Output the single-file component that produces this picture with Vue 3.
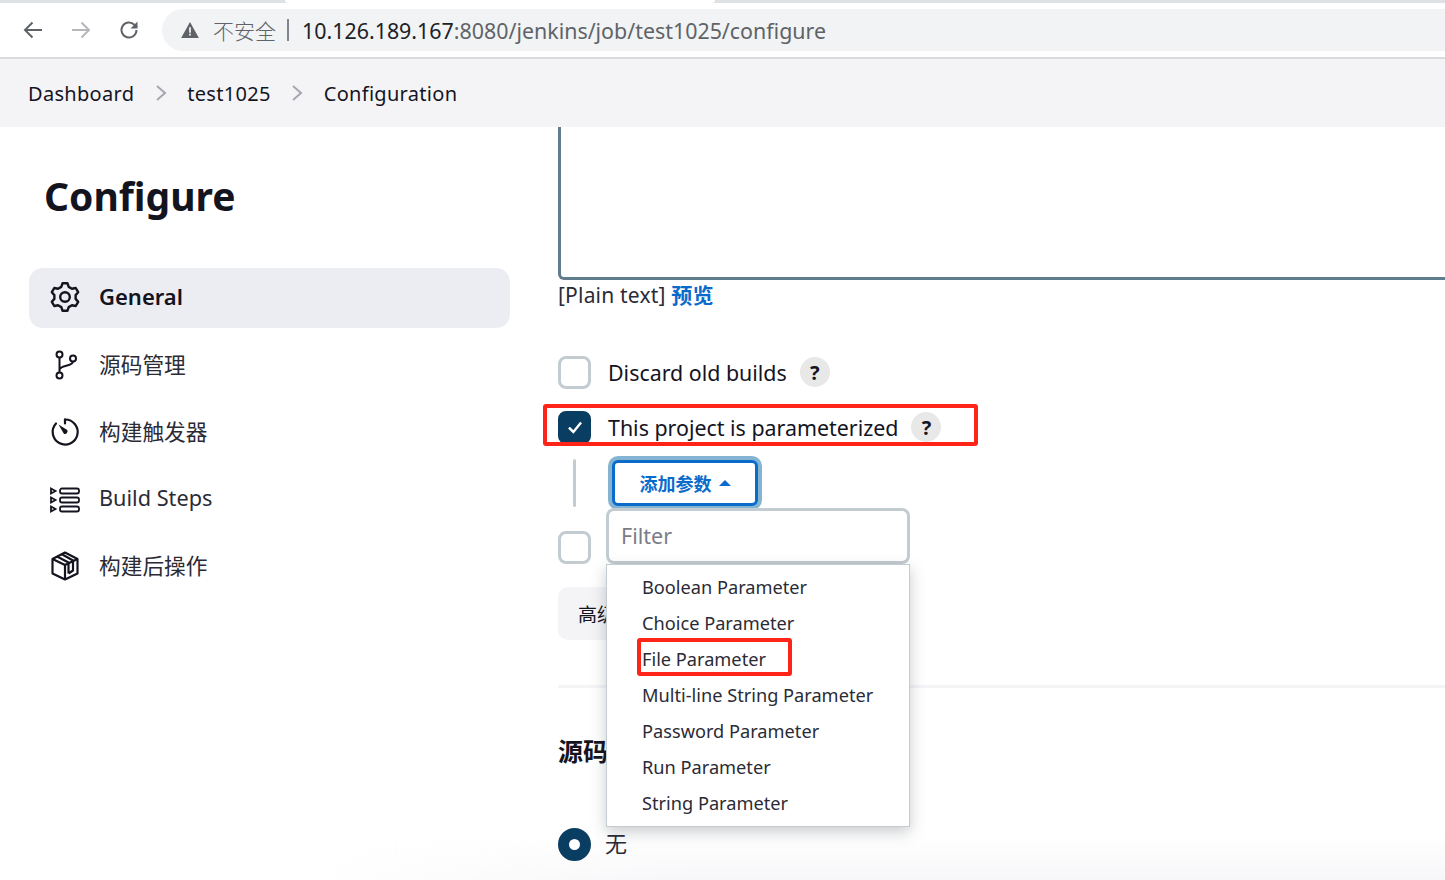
<script setup>
const crumbs = ['Dashboard', 'test1025', 'Configuration']
const params = ['Boolean Parameter', 'Choice Parameter', 'File Parameter', 'Multi-line String Parameter', 'Password Parameter', 'Run Parameter', 'String Parameter']
const gearPoints = Array.from({ length: 6 }, (_, i) => {
  const a = -90 + 60 * i
  return [[a - 20, 10.8], [a - 10, 14], [a + 10, 14], [a + 20, 10.8]]
    .map(([d, r]) => `${(16 + r * Math.cos(d * Math.PI / 180)).toFixed(2)},${(16 + r * Math.sin(d * Math.PI / 180)).toFixed(2)}`)
    .join(' ')
}).join(' ')
</script>

<template>
  <div class="page">
    <div class="tabstrip"><span class="tab"></span></div>
    <header class="toolbar">
      <svg class="tool first" viewBox="0 0 24 24"><path d="M21 12H4M11.500 4.500 4 12l7.500 7.500" fill="none" stroke="#5f6368" stroke-width="2"/></svg>
      <svg class="tool" viewBox="0 0 24 24"><path d="M3 12h17M12.500 4.500 20 12l-7.500 7.500" fill="none" stroke="#b5b7ba" stroke-width="2"/></svg>
      <svg class="tool" viewBox="0 0 24 24"><path d="M19.500 12a7.500 7.500 0 1 1-2.200-5.300L20 9.400" fill="none" stroke="#5f6368" stroke-width="2"/><path d="M20.500 3.500v7h-7z" fill="#5f6368"/></svg>
      <div class="omnibox">
        <svg class="warn" viewBox="0 0 20 18"><path d="M10 0 20 18H0z" fill="#5f6368"/><path d="M9 6h2v6H9zM9 13.300h2v2H9z" fill="#f1f3f4"/></svg>
        <span class="insecure">不安全</span>
        <span class="bar"></span>
        <span class="url"><b>10.126.189.167</b>:8080/jenkins/job/test1025/configure</span>
      </div>
    </header>

    <nav class="crumbs">
      <template v-for="(c, i) in crumbs" :key="c">
        <span>{{ c }}</span>
        <svg v-if="i < 2" class="chev" viewBox="0 0 12 18"><path d="M2 2l8 7-8 7" fill="none" stroke="#a5a6b2" stroke-width="2"/></svg>
      </template>
    </nav>

    <div class="fade"></div>
    <div class="body">
      <aside class="side">
        <h1>Configure</h1>
        <ul class="menu">
          <li class="active">
            <svg class="gear" viewBox="0 0 32 32"><polygon :points="gearPoints" fill="none" stroke="#14141f" stroke-width="2.400" stroke-linejoin="round"/><circle cx="16" cy="16" r="4.800" fill="none" stroke="#14141f" stroke-width="2.400"/></svg>
            <span>General</span>
          </li>
          <li>
            <svg viewBox="0 0 32 32"><g fill="none" stroke="#14141f" stroke-width="2"><circle cx="10.500" cy="5.500" r="3"/><circle cx="10.500" cy="26.500" r="3"/><circle cx="24" cy="9.500" r="3"/><path d="M10.500 8.500v15M10.500 21c0-5 13.500-3.500 13.500-8.500"/></g></svg>
            <span>源码管理</span>
          </li>
          <li>
            <svg viewBox="0 0 32 32"><g fill="none" stroke="#14141f" stroke-width="2.200" stroke-linecap="round"><path d="M16 3.500a12.500 12.500 0 1 1-9 4"/><path d="M16 3.500v4"/></g><path d="M9.500 8.500l8.700 5.500a2.600 2.600 0 0 1-3.300 3.700z" fill="#14141f"/></svg>
            <span>构建触发器</span>
          </li>
          <li>
            <svg class="steps" viewBox="0 0 32 32"><g fill="none" stroke="#14141f" stroke-width="1.800"><rect x="11" y="4.500" width="19" height="5" rx="2"/><rect x="11" y="13.500" width="19" height="5" rx="2"/><rect x="11" y="22.500" width="19" height="5" rx="2"/><path d="M2 4.500 6.500 7 2 9.500zM2 13.500 6.500 16 2 18.500zM2 22.500 6.500 25 2 27.500z"/></g></svg>
            <span>Build Steps</span>
          </li>
          <li>
            <svg viewBox="0 0 32 32"><g fill="none" stroke="#14141f" stroke-width="2.200" stroke-linejoin="round"><path d="M16 2.500 28.500 9v14.500L16 29.500 3.500 23.500V9z"/><path d="M3.500 9 16 15l12.500-6M16 15v14.500"/><path d="M8 6.500 19.500 12.500V23.500M12.500 4 24 10.500V20.500L19.500 23.500"/></g></svg>
            <span>构建后操作</span>
          </li>
        </ul>
      </aside>

      <main class="main">
        <div class="textarea"></div>
        <p class="plain">[Plain text] <a>预览</a></p>

        <label class="row discard">
          <span class="box"></span>
          <span>Discard old builds</span>
          <span class="help">?</span>
        </label>
        <label class="row param">
          <span class="box on">
            <svg viewBox="0 0 20 20"><path d="M4.500 10.500 8.500 14.500 15.500 6" fill="none" stroke="#fff" stroke-width="2.200"/></svg>
          </span>
          <span>This project is parameterized</span>
          <span class="help">?</span>
        </label>
        <div class="nested">
          <span class="rule"></span>
          <button class="add">添加参数<i class="caret"></i></button>
        </div>
        <div class="row third"><span class="box"></span></div>
        <div class="advanced">高级</div>
        <hr class="sep" />
        <h2>源码管理</h2>
        <div class="radio-row"><span class="radio"></span><span class="radio-label">无</span></div>

        <div class="dropdown">
          <div class="filter">Filter</div>
          <ul class="list">
            <li v-for="p in params" :key="p">{{ p }}</li>
          </ul>
        </div>
        <span class="mark mark-row"></span>
        <span class="mark mark-file"></span>
      </main>
    </div>
  </div>
</template>

<style>
html, body { margin: 0; background: #fff; }
</style>

<style scoped>
.page {
  width: 1445px; height: 880px; overflow: hidden; position: relative;
  font-family: "Noto Sans", "Noto Sans CJK SC", sans-serif;
  color: #14141f; background: #fff;
}
.tabstrip { height: 3px; background: #dee1e6; display: flex; }
.tab { width: 430px; margin-left: 285px; background: #fff; border-radius: 0 0 10px 10px; }
.toolbar {
  height: 56px; box-sizing: border-box; display: flex; align-items: center;
  border-bottom: 2px solid #dadbdd; padding: 0 0 0 21px; background: #fff;
}
.tool { width: 24px; height: 24px; margin-right: 24px; flex: none; }
.omnibox {
  flex: 1; height: 42px; margin-left: -3px; margin-right: -40px; background: #f1f3f4;
  border-radius: 21px; display: flex; align-items: center; padding-left: 19px;
}
.warn { width: 18px; height: 16px; margin-right: 14px; }
.insecure { font-size: 21px; color: #5f6368; font-weight: 300; }
.bar { width: 2px; height: 22px; background: #80868b; margin: 0 13px 0 11px; }
.url { font-size: 21.400px; color: #5f6368; white-space: nowrap; }
.url b { font-weight: 400; color: #202124; }
.crumbs {
  height: 68px; box-sizing: border-box; background: #f4f4f7; display: flex; align-items: center;
  padding: 0 0 0 28px; font-size: 20px; letter-spacing: .3px;
}
.chev { width: 12px; height: 18px; margin: 0 20.500px; flex: none; }
.body { display: flex; height: 753px; overflow: hidden; position: relative; z-index: 1; }
.side { width: 558px; flex: none; box-sizing: border-box; padding: 42px 48px 0 29px; }
h1 { margin: 0 0 45px 15px; font-size: 39px; line-height: 54px; font-weight: 700; }
.menu { list-style: none; margin: 0; padding: 0; display: flex; flex-direction: column; gap: 7px; }
.menu li {
  height: 60px; display: flex; align-items: center; gap: 18px; padding-left: 20px;
  border-radius: 14px; font-size: 21.700px; color: #2b2b36;
}
.menu li svg { width: 32px; height: 32px; flex: none; }
.menu li span { margin-bottom: 4px; }
.menu li svg.gear { margin-bottom: 2px; }
.menu li svg.steps { margin-top: 1px; }
.menu li.active { background: #ecedf2; font-weight: 600; font-size: 22px; color: #14141f; }
.main { flex: 1; min-width: 0; position: relative; }
.textarea {
  height: 150px; width: 1000px; box-sizing: content-box;
  border: 3px solid #5f7d8c; border-top: 0; border-radius: 0 0 0 6px;
}
.plain { margin: 0; font-size: 21px; line-height: 30px; color: #2b2b36; letter-spacing: .2px; }
.plain a { color: #0b6bcb; font-weight: 700; }
.row { display: flex; align-items: center; font-size: 21.400px; height: 34px; }
.discard { margin-top: 45px; }
.param { margin-top: 21px; }
.box {
  width: 33px; height: 33px; box-sizing: border-box; border: 3px solid #c3ccd1;
  border-radius: 8px; margin-right: 17px; flex: none; background: #fff;
}
.box.on { background: #0a3d62; border-color: #0a3d62; display: flex; align-items: center; justify-content: center; }
.box.on svg { width: 22px; height: 22px; }
.help {
  width: 30px; height: 30px; border-radius: 50%; background: #e8e8e8; margin-left: 13px;
  font-size: 20px; font-weight: 700; display: flex; align-items: center; justify-content: center;
}
.nested { display: flex; align-items: flex-start; margin-top: 12px; height: 52px; }
.rule { width: 3px; height: 48px; margin: 3px 36px 0 15px; background: #c3ccd1; border-radius: 2px; }
.add {
  width: 146px; height: 46px; margin-top: 4px; box-sizing: border-box;
  border: 3px solid #0b6bcb; border-radius: 6px; background: #fff; color: #0b6bcb;
  box-shadow: 0 0 0 4px #85b4d2; font: 700 18px "Noto Sans", "Noto Sans CJK SC", sans-serif;
  display: flex; align-items: center; justify-content: center; gap: 7px; padding: 0;
}
.caret { width: 0; height: 0; border: 6px solid transparent; border-top: 0; border-bottom: 6px solid #0b6bcb; }
.third { margin-top: 22px; }
.advanced {
  margin-top: 23px; width: 120px; height: 53px; border-radius: 10px; background: #f4f4f7;
  font-size: 19px; padding-left: 20px; display: flex; align-items: center; box-sizing: border-box;
}
.sep { margin: 45px 0 0; height: 3px; border: 0; background: #f4f4f7; }
h2 { margin: 43px 0 0; font-size: 25px; line-height: 40px; font-weight: 700; }
.radio-row { display: flex; align-items: center; height: 33px; gap: 14px; margin-top: 57px; font-size: 22px; color: #2b2b36; }
.radio-label { margin-bottom: 6px; }
.radio {
  width: 33px; height: 33px; border-radius: 50%; background: #fff; flex: none;
  border: 11px solid #0a3d62; box-sizing: border-box;
}
.dropdown { position: absolute; left: 48px; top: 381px; width: 304px; }
.filter {
  height: 56px; box-sizing: border-box; border: 3px solid #c3ccd1; border-radius: 8px;
  background: #fff; font-size: 21.500px; color: #7a7d85; padding: 0 0 2px 12px;
  display: flex; align-items: center; width: 304px;
}
.list {
  list-style: none; margin: 0; padding: 4px 0 6px 35px; background: #fff;
  border: 1px solid #c3ccd1; box-shadow: 0 5px 14px rgba(40, 50, 60, .25);
  height: 263px; box-sizing: border-box;
}
.list li { height: 36px; line-height: 36px; font-size: 18.200px; color: #2b2b36; white-space: nowrap; }
.mark { position: absolute; box-sizing: border-box; border: 4px solid #fe2418; border-radius: 3px; }
.mark-row { left: -15px; top: 277px; width: 435px; height: 42px; }
.mark-file { left: 79px; top: 511px; width: 155px; height: 38px; }
.fade {
  position: absolute; left: 300px; right: 0; bottom: 0; height: 45px; pointer-events: none;
  background: linear-gradient(rgba(244,244,247,0), rgba(244,244,247,.75));
  -webkit-mask-image: linear-gradient(90deg, transparent, #000 35%);
  mask-image: linear-gradient(90deg, transparent, #000 35%);
}
</style>
